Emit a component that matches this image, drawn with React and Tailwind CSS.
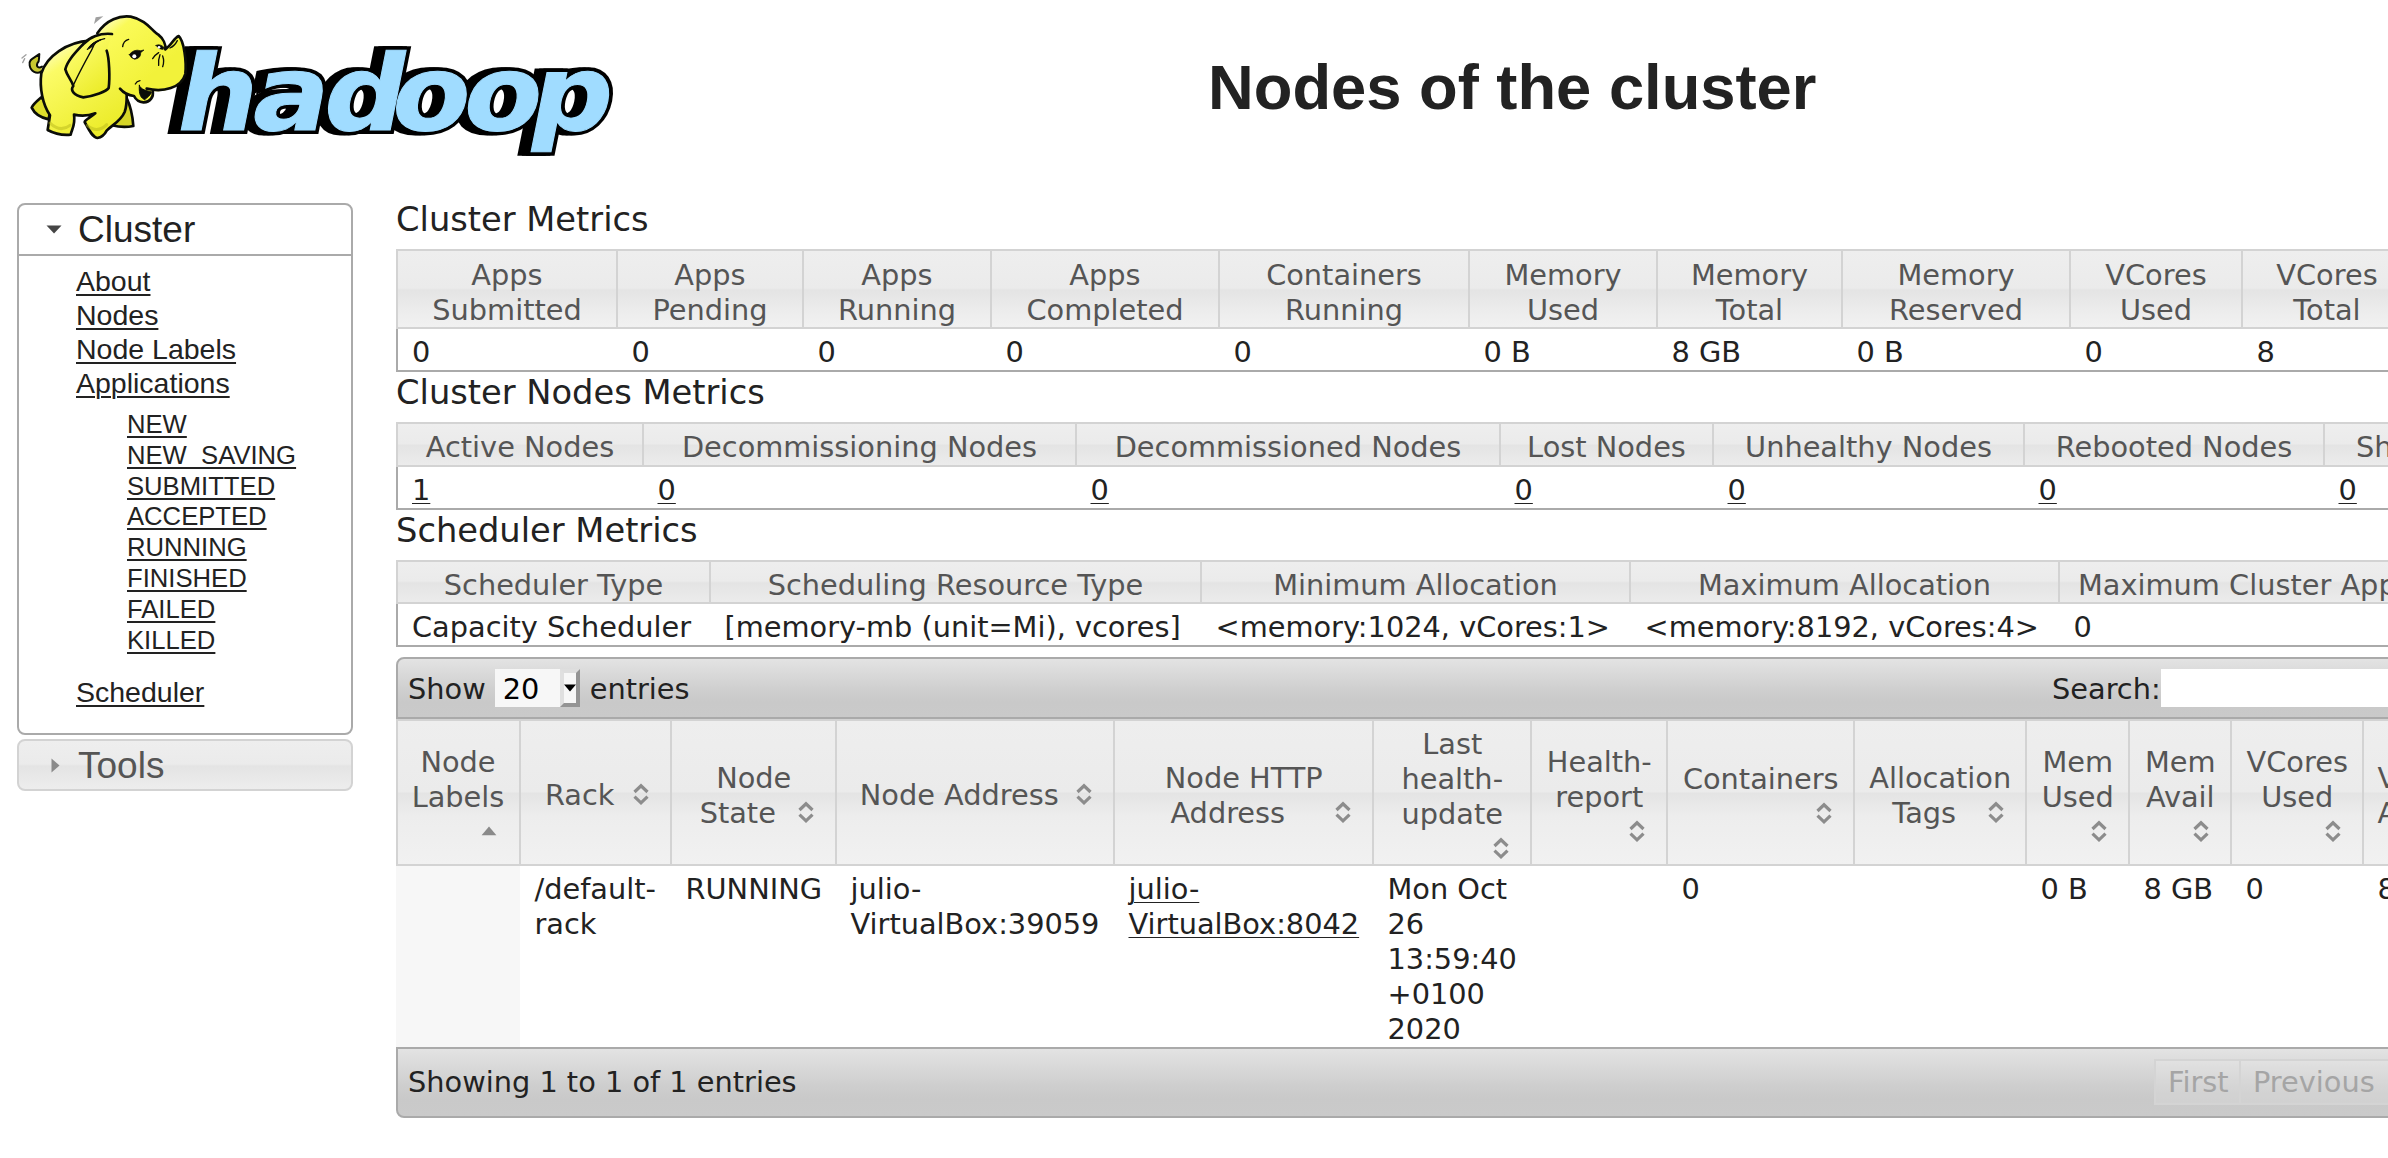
import React from "react";

const HEAD_BG =
  "bg-[linear-gradient(#eeeeee_0,#ebebeb_calc(50%_-_1px),#e4e4e4_calc(50%_+_1px),#ededed_calc(50%_+_24px),#f1f1f1_100%)]";
const BAR_BG = "bg-[linear-gradient(#e3e3e3_0,#cecece_55%,#c9c9c9_75%,#cacaca_100%)]";

function Wordmark() {
  return (
    <>
      <defs>
        <text
          id="wordmark"
          x="159 229 295 358 424.5 487"
          y="0"
          fontFamily="DejaVu Sans"
          fontWeight="bold"
          fontSize="105"
        >
          hadoop
        </text>
      </defs>
      <g transform="matrix(1.08 0 -0.2 1 0 129.5)" strokeLinejoin="miter" strokeMiterlimit="3">
        <use href="#wordmark" x="-8" fill="#000" stroke="#000" strokeWidth="8" />
        <use href="#wordmark" x="-4" fill="#000" stroke="#000" strokeWidth="8" />
        <use href="#wordmark" fill="#000" stroke="#000" strokeWidth="8" />
        <use href="#wordmark" fill="#a0dcff" stroke="#a0dcff" strokeWidth="1" />
      </g>
    </>
  );
}

function Elephant() {
  return (
    <g
      transform="translate(10 8) scale(0.3333)"
      stroke="#0b0d08"
      strokeWidth="8"
      strokeLinejoin="round"
      strokeLinecap="round"
    >
      <defs>
        <linearGradient id="hide" x1="0" y1="0" x2="0.6" y2="1">
          <stop offset="0" stopColor="#fffff0" />
          <stop offset="0.3" stopColor="#fbfb66" />
          <stop offset="1" stopColor="#ecec2a" />
        </linearGradient>
        <linearGradient id="face" x1="0" y1="0" x2="0.6" y2="0.7">
          <stop offset="0" stopColor="#fffff0" />
          <stop offset="0.3" stopColor="#fafa58" />
          <stop offset="1" stopColor="#f2f23a" />
        </linearGradient>
      </defs>
      <path d="M94 190 C80 200 62 190 59 172 C54 155 72 150 88 138 C86 152 90 158 82 166 C78 176 86 182 96 176" fill="#c8c830" strokeWidth="6" />
      <path d="M94 268 C80 280 68 290 65 299 C74 318 96 330 116 334 L122 300Z" fill="#dede2c" />
      <path d="M350 270 C362 295 368 325 370 354 C345 359 322 356 306 352 L330 300Z" fill="#d6d628" />
      <path
        d="M240 98 C170 102 110 145 94 196 C88 240 98 290 120 322 L113 366 C135 378 160 382 182 380 C185 364 197 352 192 320 C210 324 235 324 256 316 C240 330 226 334 224 342 C234 360 246 388 262 390 C275 388 284 380 290 368 C305 352 332 340 344 312 C352 290 350 270 350 250 L300 120Z"
        fill="url(#hide)"
      />
      <path d="M120 345 Q150 375 180 352 M232 352 Q262 378 290 350" stroke="#b8b81c" strokeWidth="9" fill="none" opacity="0.5" />
      <path
        d="M262 76 C290 34 330 22 362 26 C410 36 425 68 445 80 C460 92 468 110 468 124 C484 112 492 90 506 84 C522 98 530 160 526 198 C514 240 460 254 428 249 C432 266 420 284 400 283 C385 282 376 272 372 264 C355 262 340 254 330 242 L290 215 L262 120Z"
        fill="url(#face)"
        stroke="none"
      />
      <path
        d="M262 76 C290 34 330 22 362 26 C410 36 425 68 445 80 C460 92 468 110 466 124 C484 112 492 90 506 84 C522 98 530 160 526 198 C514 240 460 254 410 242 M428 249 C432 266 420 284 400 283 C385 282 376 272 372 264 C355 262 340 254 330 242"
        fill="none"
      />
      <path d="M388 232 C392 246 412 248 424 252 C422 262 412 268 404 275 C394 270 386 262 388 232Z" fill="#0b0d08" strokeWidth="3" />
      <path
        d="M306 78 C270 74 238 88 220 108 C196 134 172 158 166 184 C172 206 186 218 190 234 C180 246 190 262 220 268 C252 264 290 250 296 240 C300 210 298 150 290 128"
        fill="url(#hide)"
      />
      <path d="M190 232 C206 196 226 160 246 124 C252 104 262 96 284 92" fill="none" strokeWidth="4" />
      <path d="M232 124 Q246 100 276 94 Q256 102 246 116Z" fill="#0b0d08" strokeWidth="3" />
      <path d="M338 116 Q340 98 356 94 M376 228 Q380 220 390 218 M428 152 Q436 140 446 134 M446 172 Q444 156 450 140 M458 176 Q464 160 458 144 M480 120 Q494 114 502 98" fill="none" strokeWidth="4" />
      <path d="M358 140 Q370 122 392 128 L402 126 L392 134 Q394 150 374 154 Q362 150 358 140Z" fill="#0b0d08" strokeWidth="2" />
      <circle cx="373" cy="145" r="6" fill="#fff" stroke="none" />
      <path d="M438 112 Q450 106 462 118 L460 124 Q446 126 438 112Z" fill="#0b0d08" strokeWidth="2" />
      <circle cx="447" cy="118" r="4" fill="#fff" stroke="none" />
      <path d="M36 150 L48 140 M38 164 L44 152" stroke="#a0a0a0" strokeWidth="4" fill="none" />
      <path d="M252 48 L257 28 L280 25 Z" fill="#a0a0a0" stroke="none" />
    </g>
  );
}

function SortBoth() {
  return (
    <span className="float-right flex h-[32px] w-[32px] items-center justify-center">
      <svg width="16" height="22" viewBox="0 0 16 22" fill="none" stroke="#8c8c8c" strokeWidth="3.2">
        <path d="M1.5 9 L8 2.8 L14.5 9" />
        <path d="M1.5 13.6 L8 19.8 L14.5 13.6" />
      </svg>
    </span>
  );
}

function SortAsc() {
  return (
    <span className="float-right flex h-[32px] w-[32px] items-center justify-center">
      <svg width="16" height="10" viewBox="0 0 16 10">
        <path d="M8 0.6 L15.4 9.2 H0.6Z" fill="#8a8a8a" />
      </svg>
    </span>
  );
}

function Lines({ text }) {
  const parts = text.split("\n");
  return parts.map((part, i) => (
    <React.Fragment key={i}>
      {i > 0 && <br />}
      {part}
    </React.Fragment>
  ));
}

function MetricTable({ title, cols, link, head, row }) {
  return (
    <section>
      <h3 className="h-[50px] pt-[7px] text-[33.7px] leading-[28px] whitespace-nowrap">{title}</h3>
      <table className="w-max table-fixed border-separate border-spacing-0 border-l-0">
        <colgroup>
          {cols.map((c) => (
            <col key={c.h} style={{ width: c.w }} />
          ))}
        </colgroup>
        <thead>
          <tr className={head}>
            {cols.map((c) => (
              <th
                key={c.h}
                className={`${HEAD_BG} ${c.left ? "text-left" : "text-center"} border-y-2 border-r-2 border-[#d3d3d3] p-0 font-normal whitespace-nowrap text-[#555] first:border-l-2`}
                style={c.left ? { paddingLeft: c.left } : undefined}
              >
                <div className="-mb-[2px]">
                  <Lines text={c.h} />
                </div>
              </th>
            ))}
          </tr>
        </thead>
        <tbody>
          <tr className={row}>
            {cols.map((c) => (
              <td
                key={c.h}
                className="border-b-2 border-[#aaa] p-0 pl-[13.5px] whitespace-nowrap first:border-l-2 first:pl-[14px]"
              >
                {link ? <a className="underline decoration-1 underline-offset-[3px]">{c.v}</a> : c.v}
              </td>
            ))}
          </tr>
        </tbody>
      </table>
    </section>
  );
}

const clusterCols = [
  { h: "Apps\nSubmitted", v: "0", w: 222 },
  { h: "Apps\nPending", v: "0", w: 186 },
  { h: "Apps\nRunning", v: "0", w: 188 },
  { h: "Apps\nCompleted", v: "0", w: 228 },
  { h: "Containers\nRunning", v: "0", w: 250 },
  { h: "Memory\nUsed", v: "0 B", w: 188 },
  { h: "Memory\nTotal", v: "8 GB", w: 185 },
  { h: "Memory\nReserved", v: "0 B", w: 228 },
  { h: "VCores\nUsed", v: "0", w: 172 },
  { h: "VCores\nTotal", v: "8", w: 170 },
];

const nodeCols = [
  { h: "Active Nodes", v: "1", w: 248 },
  { h: "Decommissioning Nodes", v: "0", w: 433 },
  { h: "Decommissioned Nodes", v: "0", w: 424 },
  { h: "Lost Nodes", v: "0", w: 213 },
  { h: "Unhealthy Nodes", v: "0", w: 311 },
  { h: "Rebooted Nodes", v: "0", w: 300 },
  { h: "Shutdown Nodes", v: "0", w: 290, left: 31 },
];

const schedulerCols = [
  { h: "Scheduler Type", v: "Capacity Scheduler", w: 315 },
  { h: "Scheduling Resource Type", v: "[memory-mb (unit=Mi), vcores]", w: 491 },
  { h: "Minimum Allocation", v: "<memory:1024, vCores:1>", w: 429 },
  { h: "Maximum Allocation", v: "<memory:8192, vCores:4>", w: 429 },
  { h: "Maximum Cluster Application Priority", v: "0", w: 560, left: 18 },
];

const listCols = [
  { h: "Node\nLabels", v: "", w: 125, asc: true },
  { h: "Rack", v: "/default-\nrack", w: 151 },
  { h: "Node\nState", v: "RUNNING", w: 165 },
  { h: "Node Address", v: "julio-\nVirtualBox:39059", w: 278 },
  { h: "Node HTTP\nAddress", v: "julio-\nVirtualBox:8042", w: 259, link: true },
  { h: "Last\nhealth-\nupdate", v: "Mon Oct\n26\n13:59:40\n+0100\n2020", w: 158 },
  { h: "Health-\nreport", v: "", w: 136 },
  { h: "Containers", v: "0", w: 187 },
  { h: "Allocation\nTags", v: "", w: 172 },
  { h: "Mem\nUsed", v: "0 B", w: 103 },
  { h: "Mem\nAvail", v: "8 GB", w: 102 },
  { h: "VCores\nUsed", v: "0", w: 132 },
  { h: "VCores\nAvail", v: "8", w: 180, left: true },
];

const states = ["NEW", "NEW_SAVING", "SUBMITTED", "ACCEPTED", "RUNNING", "FINISHED", "FAILED", "KILLED"];

function Sidebar() {
  const link = "underline decoration-2 underline-offset-[3px]";
  return (
    <nav className="ml-[17px] w-[336px] shrink-0 pt-[4px] font-['Liberation_Sans',sans-serif]">
      <div className="h-[532px] rounded-[8px] border-2 border-[#aaa]">
        <div className="flex h-[51px] items-center border-b-2 border-[#aaa] text-[37px]">
          <svg className="ml-[27px] mr-[16px]" width="16" height="9" viewBox="0 0 16 9">
            <path d="M0.5 0.5 H15.5 L8 8.5Z" fill="#454545" />
          </svg>
          <span className="leading-[48px]">Cluster</span>
        </div>
        <ul className="pt-[8px] pl-[57px] text-[28.5px] leading-[34px]">
          <li><a className={link}>About</a></li>
          <li><a className={link}>Nodes</a></li>
          <li><a className={link}>Node Labels</a></li>
          <li>
            <a className={link}>Applications</a>
            <ul className="pt-[9px] pb-[20px] pl-[51px] text-[25.65px] leading-[30.8px]">
              {states.map((s) => (
                <li key={s}><a className={link}>{s}</a></li>
              ))}
            </ul>
          </li>
          <li><a className={link}>Scheduler</a></li>
        </ul>
      </div>
      <div className={`${HEAD_BG} mt-[4px] flex h-[52px] items-center rounded-[8px] border-2 border-[#d3d3d3] text-[37px] text-[#555]`}>
        <svg className="ml-[32px] mr-[18px]" width="9" height="15" viewBox="0 0 9 15">
          <path d="M0.5 0.5 L8.5 7.5 L0.5 14.5Z" fill="#8a8a8a" />
        </svg>
        <span className="pt-px leading-[48px]">Tools</span>
      </div>
    </nav>
  );
}

function NodeList() {
  return (
    <section className="mt-[10px] w-[2100px]">
      <div className={`${BAR_BG} flex h-[62px] items-center rounded-t-[8px] border-2 border-[#aaa] pl-[10px]`}>
        <span className="pt-[2px]">Show</span>
        <span className="ml-[9px] flex h-[38px] w-[85px] bg-[#f7f7f7] text-black">
          <span className="w-[65px] pl-[8px] leading-[40px]">20</span>
          <span className="flex w-[20px] items-center justify-center border-4 border-t-[#dedede] border-r-[#949494] border-b-[#949494] border-l-[#e0e0e0] bg-[#f7f7f7]">
            <svg width="12" height="8" viewBox="0 0 12 8">
              <path d="M0 0.5 H12 L6 7.5Z" fill="#000" />
            </svg>
          </span>
        </span>
        <span className="ml-[10px] w-[120px] pt-[2px]">entries</span>
        <label className="ml-auto mr-0 flex w-[442px] items-center">
          <span className="w-[109px] pt-[2px]">Search:</span>
          <span className="h-[38px] w-[333px] bg-white" />
        </label>
      </div>
      <table className="w-max table-fixed border-separate border-spacing-0">
        <colgroup>
          {listCols.map((c) => (
            <col key={c.h} style={{ width: c.w }} />
          ))}
        </colgroup>
        <thead>
          <tr className="h-[147px]">
            {listCols.map((c) => (
              <th
                key={c.h}
                className={`${HEAD_BG} ${c.left ? "text-left" : "text-center"} border-y-2 border-r-2 border-[#d3d3d3] p-0 pt-[6px] pr-[13px] pl-[13.5px] align-middle font-normal text-[#555] first:border-l-2 first:pr-[14px] first:pl-[13px]`}
              >
                <Lines text={c.h} />
                {c.asc ? <SortAsc /> : c.left ? null : <SortBoth />}
              </th>
            ))}
          </tr>
        </thead>
        <tbody>
          <tr className="h-[181px]">
            {listCols.map((c) => (
              <td key={c.h} className="p-0 pt-[6px] pl-[13.5px] align-top whitespace-nowrap first:border-r first:border-white first:bg-[#f7f7f7]">
                {c.link ? (
                  <a className="underline decoration-1 underline-offset-[3px]"><Lines text={c.v} /></a>
                ) : (
                  <Lines text={c.v} />
                )}
              </td>
            ))}
          </tr>
        </tbody>
      </table>
      <div className={`${BAR_BG} flex h-[71px] items-center rounded-b-[8px] border-2 border-[#aaa] pl-[10px]`}>
        <span>Showing 1 to 1 of 1 entries</span>
        <div className="ml-auto flex w-[340px] pb-[2px] text-[#a5a5a5]">
          <span className="h-[46px] w-[87px] border-2 border-[#d4d4d4] bg-white/15 pl-[12px] leading-[43px]">First</span>
          <span className="h-[46px] w-[149px] border-y-2 border-r-2 border-[#d4d4d4] bg-white/15 pl-[12px] leading-[43px]">Previous</span>
        </div>
      </div>
    </section>
  );
}

export default function App() {
  return (
    <div className="h-[1158px] w-[2388px] overflow-hidden bg-white text-[#222]">
      <header className="flex h-[199px]">
        <svg width="640" height="170" viewBox="0 0 640 170" role="img" aria-label="hadoop">
          <Wordmark />
          <Elephant />
        </svg>
        <h1 className="ml-[568px] pt-[51px] font-['Liberation_Sans',sans-serif] text-[63.3px] leading-[73px] font-bold whitespace-nowrap">
          Nodes of the cluster
        </h1>
      </header>
      <div className="flex">
        <Sidebar />
        <main className="ml-[43px] w-[1992px] shrink-0 overflow-hidden font-['DejaVu_Sans',sans-serif] text-[28.8px] leading-[35px]">
          <MetricTable title="Cluster Metrics" cols={clusterCols} head="h-[80px] [&>th]:pt-[6px]" row="h-[43px] [&>td]:pt-[5px]" />
          <MetricTable title="Cluster Nodes Metrics" cols={nodeCols} link head="h-[45px] [&>th]:pt-[3px]" row="h-[43px] [&>td]:pt-[5px]" />
          <MetricTable title="Scheduler Metrics" cols={schedulerCols} head="h-[44px] [&>th]:pt-[5px]" row="h-[43px] [&>td]:pt-[6px]" />
          <NodeList />
        </main>
      </div>
    </div>
  );
}
